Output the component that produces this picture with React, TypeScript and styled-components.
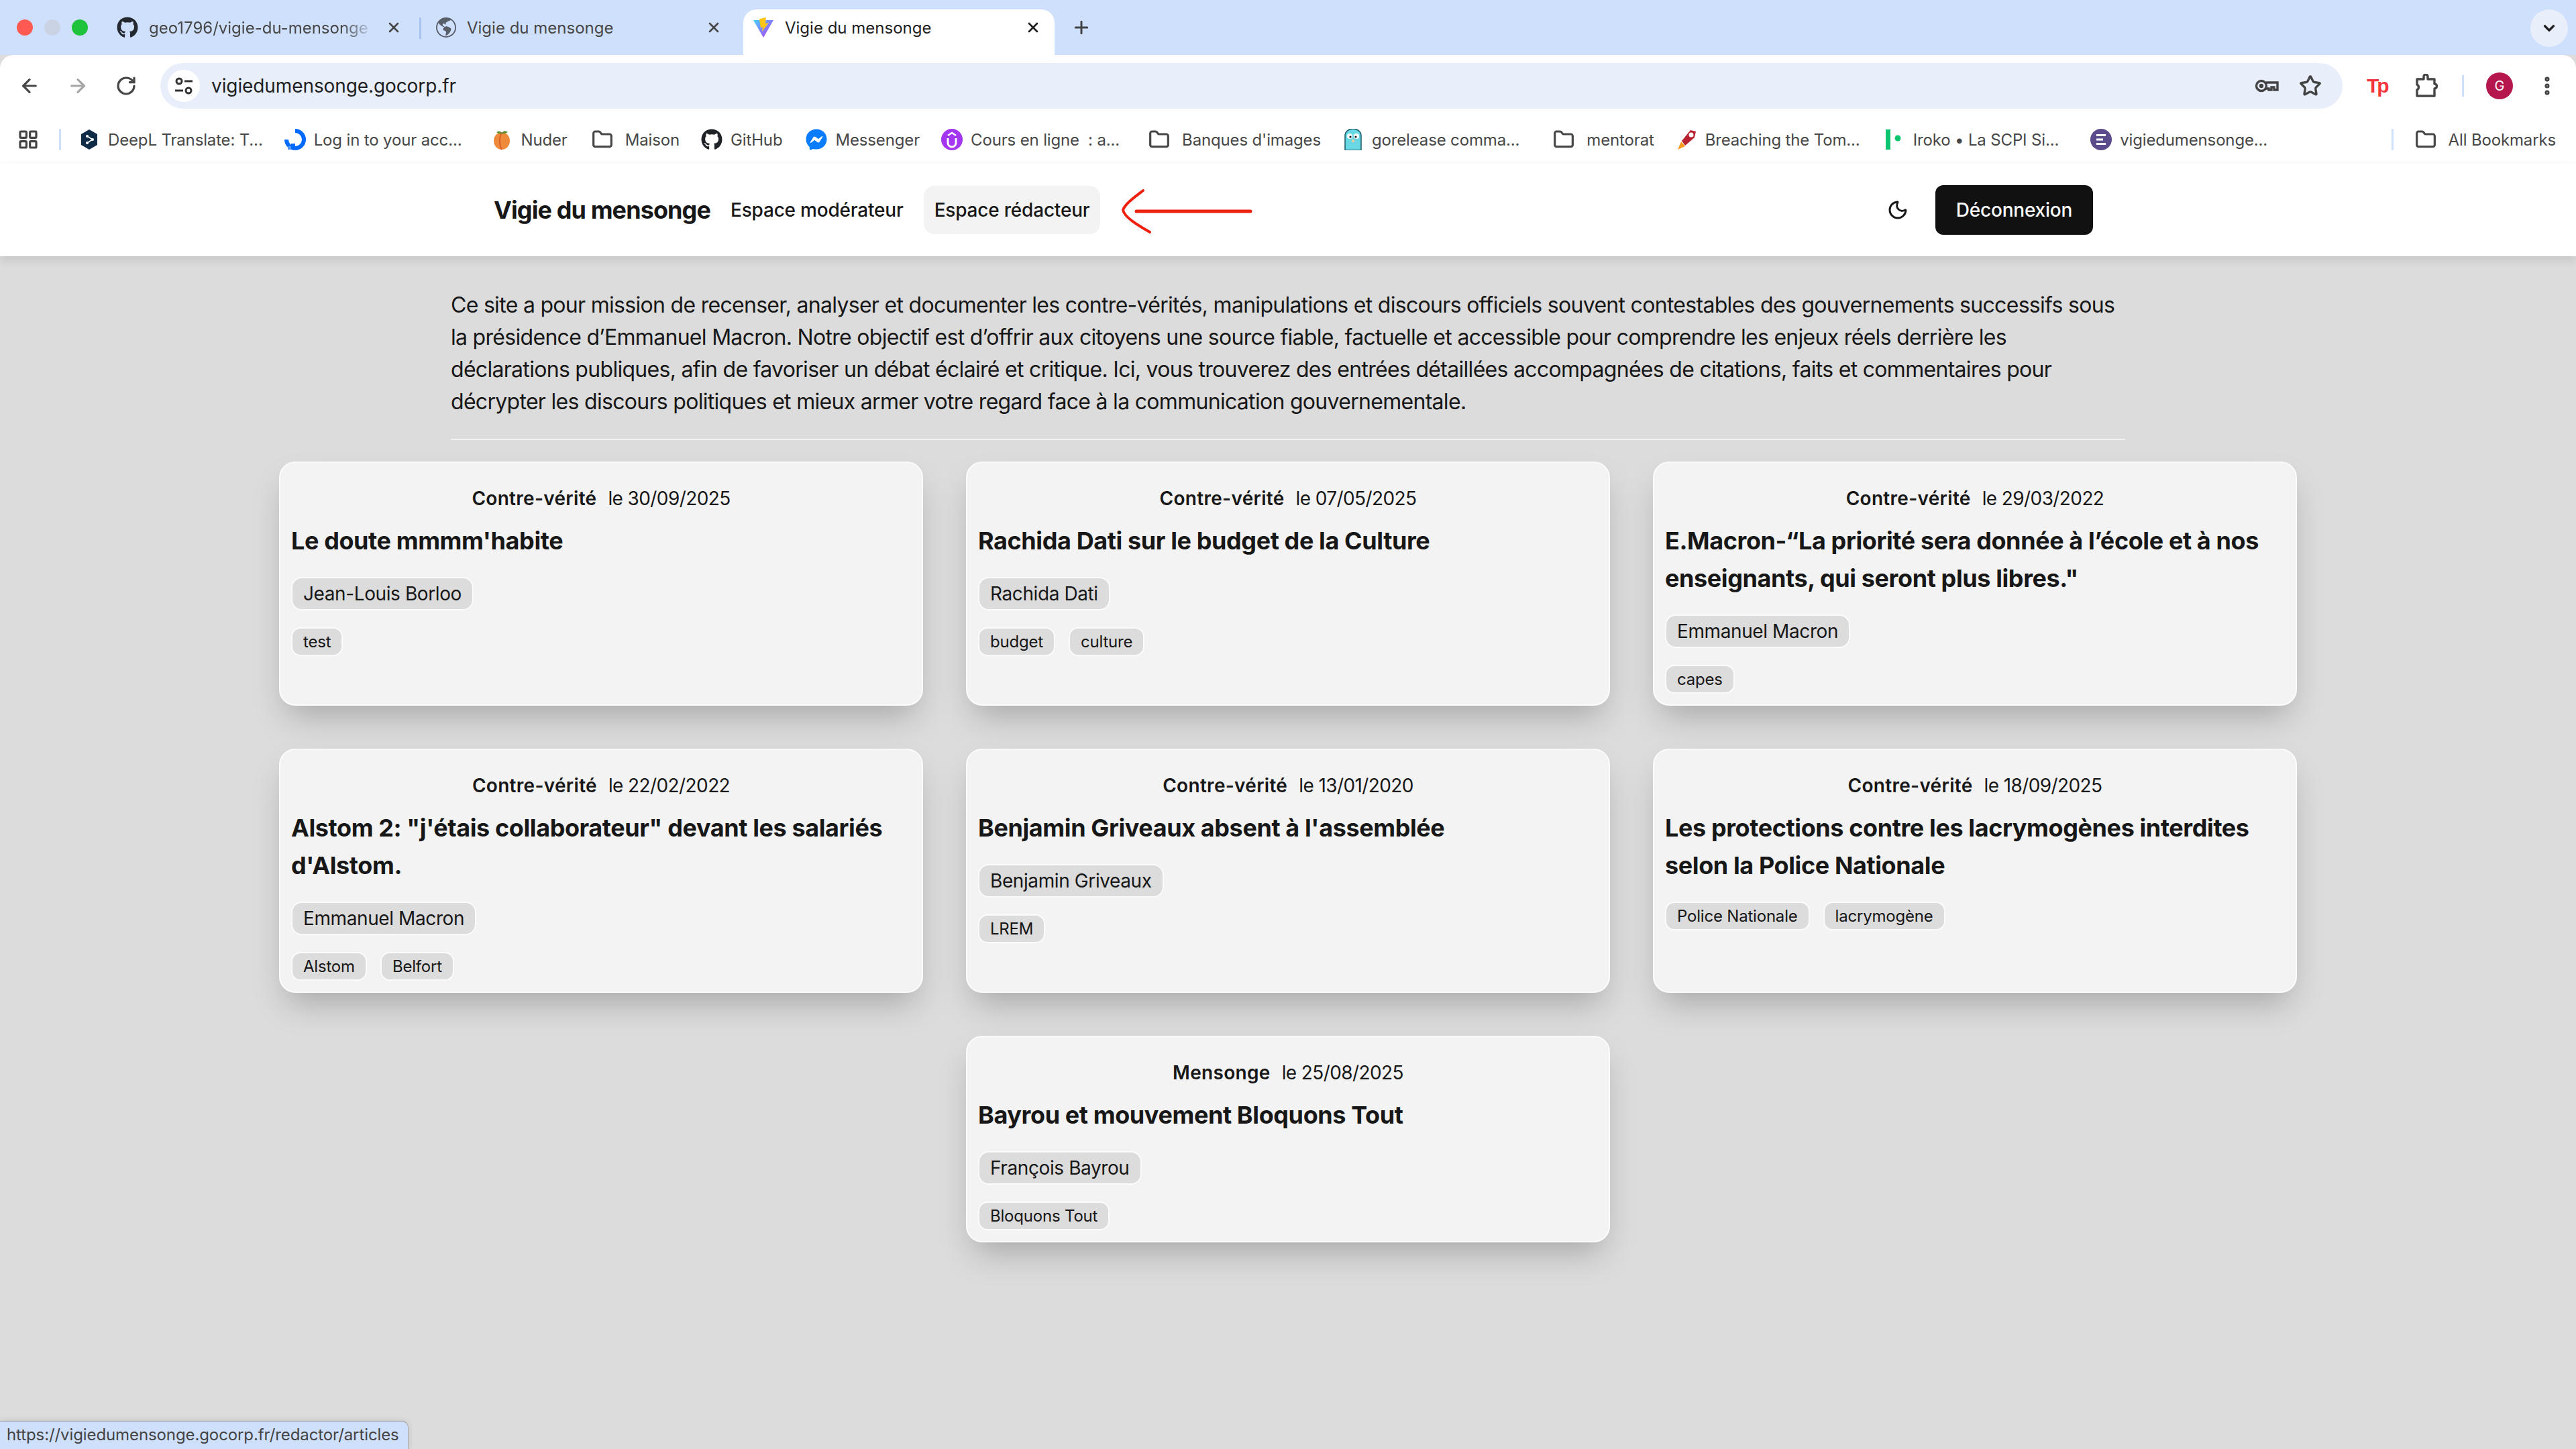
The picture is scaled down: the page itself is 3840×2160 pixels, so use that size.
import React from 'react';
import styled, {createGlobalStyle} from 'styled-components';
import {ArrowLeft, ArrowRight, RotateCw, X, Plus, Moon, Star, EllipsisVertical, ChevronDown, Folder, LayoutGrid} from 'lucide-react';
import {FaGithub, FaFacebookMessenger} from 'react-icons/fa';
import {BsGlobeAmericas} from 'react-icons/bs';

const GlobalStyle=createGlobalStyle`
    html,body{
        margin:0;
        padding:0;
        background:#dcdcdc;
    }
    *{
        box-sizing:border-box;
    }
`;

const Window=styled.div`
    position:relative;
    width:3840px;
    height:2160px;
    overflow:hidden;
    display:flex;
    flex-direction:column;
    background:#dcdcdc;
    font-family:Inter, "Liberation Sans", sans-serif;
    color:#171717;
`;

/* browser chrome */
const TabStrip=styled.div`
    height:82px;
    background:#cfe0fd;
    display:flex;
    align-items:flex-end;
    padding-left:25px;
    padding-right:12px;
    flex-shrink:0;
`;

const Lights=styled.div`
    display:flex;
    gap:17px;
    align-self:flex-start;
    margin-top:29px;
    margin-right:29px;
`;

const Light=styled.span<{$color:string}>`
    width:24px;
    height:24px;
    border-radius:50%;
    background:${p=>p.$color};
`;

const Tab=styled.div<{$active?:boolean;$width:number;$endPad:number}>`
    position:relative;
    width:${p=>p.$width}px;
    height:68px;
    padding:0 ${p=>p.$endPad}px 14px 14px;
    display:flex;
    align-items:center;
    gap:16px;
    font-size:24px;
    color:${p=>p.$active?'#1f1f1f':'#474747'};
    background:${p=>p.$active?'#ffffff':'transparent'};
    border-radius:20px 20px 0 0;
    svg{
        flex-shrink:0;
    }
`;

const TabTitle=styled.span<{$fade?:boolean}>`
    flex:1;
    min-width:0;
    white-space:nowrap;
    overflow:hidden;
    ${p=>p.$fade?'mask-image:linear-gradient(90deg,#000 85%,transparent);':''}
`;

const TabDivider=styled.span`
    width:3px;
    height:32px;
    background:#a9c3ef;
    align-self:flex-start;
    margin:26px 8px 0 10px;
`;

const NewTab=styled.div`
    align-self:flex-start;
    margin:26px 0 0 25px;
    color:#444;
    display:flex;
`;

const TabListButton=styled.div`
    margin-left:auto;
    align-self:flex-start;
    margin-top:14px;
    width:56px;
    height:56px;
    border-radius:50%;
    background:#e8effb;
    display:flex;
    align-items:center;
    justify-content:center;
    color:#1f1f1f;
`;

const Toolbar=styled.div`
    height:96px;
    background:#fff;
    border-radius:20px 20px 0 0;
    display:flex;
    align-items:center;
    padding:0 24px 4px 28px;
    flex-shrink:0;
`;

const NavIcons=styled.div`
    display:flex;
    align-items:center;
    gap:40px;
    color:#474747;
    margin-right:35px;
`;

const AddressBar=styled.div`
    width:3253px;
    height:68px;
    border-radius:34px;
    background:#e8effb;
    display:flex;
    align-items:center;
    padding:0 31px 0 11px;
    flex-shrink:0;
`;

const SiteButton=styled.div`
    width:48px;
    height:48px;
    border-radius:50%;
    background:#fff;
    display:flex;
    align-items:center;
    justify-content:center;
    margin-right:17px;
    color:#333;
`;

const Url=styled.span`
    font-size:28px;
    letter-spacing:-0.1px;
    color:#1f1f1f;
    flex:1;
`;

const AddressActions=styled.div`
    display:flex;
    align-items:center;
    gap:30px;
    color:#444;
`;

const ToolActions=styled.div`
    display:flex;
    align-items:center;
    margin-left:36px;
    color:#444;
`;

const TpMark=styled.span`
    font-family:"Liberation Sans", sans-serif;
    font-size:30px;
    font-weight:700;
    letter-spacing:-3px;
    color:#f4353b;
    margin-right:38px;
    width:34px;
`;

const ToolDivider=styled.span`
    width:3px;
    height:32px;
    background:#cfe0fd;
    margin:0 33px 0 36px;
`;

const Avatar=styled.span`
    width:40px;
    height:40px;
    border-radius:50%;
    background:#b5164e;
    color:#fff;
    font-size:20px;
    display:flex;
    align-items:center;
    justify-content:center;
    margin-right:34px;
`;

const BookmarkBar=styled.div`
    height:66px;
    background:#fff;
    display:flex;
    align-items:center;
    padding:0 30px 6px 26px;
    font-size:24px;
    letter-spacing:-0.15px;
    color:#474747;
    flex-shrink:0;
`;

const BookmarkDivider=styled.span`
    width:3px;
    height:32px;
    background:#cfe0fd;
    margin:0 26px 0 30px;
`;

const Bookmark=styled.div<{$folder?:boolean;$lead?:number}>`
    display:flex;
    align-items:center;
    gap:${p=>p.$folder?18:12}px;
    margin-left:${p=>p.$lead||0}px;
    margin-right:32px;
    white-space:pre;
    svg{
        flex-shrink:0;
    }
`;

const AllBookmarks=styled(Bookmark)`
    margin-right:0;
`;

const BookmarkSpacer=styled.div`
    flex:1;
`;

const StatusBubble=styled.div`
    position:absolute;
    left:0;
    bottom:0;
    width:609px;
    height:42px;
    padding-left:10px;
    background:#cfe0fd;
    border-top:1px solid #999;
    border-right:1px solid #aaa;
    border-top-right-radius:10px;
    font-size:24px;
    letter-spacing:-0.1px;
    line-height:40px;
    color:#444;
    white-space:nowrap;
    box-shadow:0 0 10px rgba(0,0,0,0.12);
`;

/* page */
const TopNav=styled.nav`
    position:relative;
    z-index:1;
    height:138px;
    background:#fff;
    display:flex;
    align-items:center;
    padding:0 720px 0 736px;
    box-shadow:0 6px 14px rgba(0,0,0,0.1);
    flex-shrink:0;
`;

const Brand=styled.div`
    font-size:36px;
    font-weight:650;
    letter-spacing:-0.9px;
    color:#171717;
    margin-right:14px;
    white-space:nowrap;
`;

const NavLinks=styled.div`
    display:flex;
    gap:14px;
`;

const NavLink=styled.div<{$active?:boolean}>`
    font-size:28px;
    font-weight:500;
    letter-spacing:-0.2px;
    height:72px;
    display:flex;
    align-items:center;
    padding:0 16px;
    border-radius:16px;
    background:${p=>p.$active?'#f3f3f3':'transparent'};
    white-space:nowrap;
`;

const ArrowMark=styled.svg`
    margin-left:29px;
`;

const NavRight=styled.div`
    margin-left:auto;
    display:flex;
    align-items:center;
    gap:40px;
`;

const LogoutButton=styled.div`
    width:235px;
    height:74px;
    background:#111;
    color:#fafafa;
    font-size:28px;
    font-weight:500;
    letter-spacing:-0.2px;
    border-radius:12px;
    display:flex;
    align-items:center;
    justify-content:center;
`;

const Main=styled.main`
    display:flex;
    flex-direction:column;
    align-items:center;
    padding-top:49px;
`;

const Intro=styled.div`
    width:2496px;
    font-size:32px;
    letter-spacing:-0.7px;
    line-height:48px;
    color:#171717;
    padding-bottom:31px;
    border-bottom:2px solid #f2f2f2;
    margin-bottom:32px;
`;

const CardGrid=styled.div`
    display:flex;
    flex-wrap:wrap;
    justify-content:center;
    gap:64px;
    width:3008px;
`;

const Card=styled.article`
    width:960px;
    height:364px;
    padding:32px 16px 16px;
    background:#f3f3f3;
    border:2px solid #fbfbfb;
    border-radius:24px;
    box-shadow:0 25px 50px -12px rgba(0,0,0,0.25);
    display:flex;
    flex-direction:column;
    &:last-child{
        height:308px;
    }
`;

const CardHead=styled.div`
    text-align:center;
    font-size:28px;
    line-height:42px;
    margin-bottom:14px;
    display:flex;
    justify-content:center;
    gap:17px;
`;

const Kind=styled.span`
    font-weight:600;
    letter-spacing:0.3px;
`;

const HeadDate=styled.span`
    letter-spacing:-0.6px;
`;

const CardTitle=styled.h2`
    margin:0 0 26px;
    font-size:36px;
    letter-spacing:-0.4px;
    line-height:56px;
    font-weight:650;
    color:#171717;
`;

const ChipRow=styled.div`
    display:flex;
    gap:20px;
    margin-bottom:25px;
    &:last-child{
        margin-bottom:0;
    }
`;

const PersonChip=styled.span`
    height:50px;
    padding:0 16px;
    border:2px solid #fbfbfb;
    border-radius:16px;
    background:#dcdcdc;
    font-size:28px;
    letter-spacing:-0.4px;
    line-height:46px;
`;

const TagChip=styled.span`
    height:43px;
    padding:0 16px;
    border:2px solid #fbfbfb;
    border-radius:14px;
    background:#dcdcdc;
    font-size:24px;
    letter-spacing:-0.2px;
    line-height:39px;
`;

const ViteIcon=()=>(
    <svg width="32" height="32" viewBox="0 0 32 32">
        <defs>
            <linearGradient id="viteA" x1="0" y1="0" x2="1" y2="1">
                <stop offset="0" stopColor="#41d1ff"/>
                <stop offset="1" stopColor="#bd34fe"/>
            </linearGradient>
        </defs>
        <path d="M1 5 L31 5 L16 31 Z" fill="url(#viteA)"/>
        <path d="M20 1 L10 3 L12 17 L15 15 L14 22 L24 9 L19 10 Z" fill="#ffc517"/>
    </svg>
);

const DeepLIcon=()=>(
    <svg width="32" height="32" viewBox="0 0 32 32">
        <path d="M16 1 L28 8 V24 L16 31 L4 24 V8 Z" fill="#0f2b46"/>
        <circle cx="13" cy="11" r="2" fill="#fff"/>
        <circle cx="13" cy="21" r="2" fill="#fff"/>
        <circle cx="21" cy="16" r="2" fill="#fff"/>
        <path d="M13 11 L21 16 L13 21" stroke="#fff" strokeWidth="1.5" fill="none"/>
    </svg>
);

const OceanIcon=()=>(
    <svg width="32" height="32" viewBox="0 0 32 32">
        <path d="M16 3 A13 13 0 1 1 3 16" stroke="#0069ff" strokeWidth="6" fill="none"/>
        <rect x="10" y="22" width="6" height="6" fill="#0069ff"/>
        <rect x="5" y="26" width="5" height="5" fill="#4d97ff"/>
    </svg>
);

const PeachIcon=()=>(
    <svg width="32" height="32" viewBox="0 0 32 32">
        <ellipse cx="16" cy="18" rx="12" ry="13" fill="#ef8a3a"/>
        <path d="M16 6 C12 12 12 24 16 31" stroke="#d9602a" strokeWidth="2" fill="none"/>
        <path d="M8 5 Q13 2 16 6 Q20 1 25 5 Q20 8 16 7 Q12 8 8 5Z" fill="#5d8a2f"/>
    </svg>
);

const UdemyIcon=()=>(
    <svg width="32" height="32" viewBox="0 0 32 32">
        <circle cx="16" cy="16" r="16" fill="#a435f0"/>
        <path d="M10 14 V21 A6 6 0 0 0 22 21 V14" stroke="#fff" strokeWidth="3" fill="none"/>
        <path d="M10 10 L16 6 L22 10" stroke="#fff" strokeWidth="2.5" fill="none"/>
    </svg>
);

const GopherIcon=()=>(
    <svg width="32" height="32" viewBox="0 0 32 32">
        <path d="M4 32 V10 A12 10 0 0 1 28 10 V32 Z" fill="#6ad7e5" stroke="#1d5b66" strokeWidth="1.5"/>
        <circle cx="11" cy="11" r="4" fill="#fff"/>
        <circle cx="21" cy="11" r="4" fill="#fff"/>
        <circle cx="12" cy="12" r="1.6" fill="#111"/>
        <circle cx="20" cy="12" r="1.6" fill="#111"/>
        <rect x="14" y="16" width="4" height="4" fill="#e8c9a0"/>
    </svg>
);

const RocketIcon=()=>(
    <svg width="32" height="32" viewBox="0 0 32 32">
        <path d="M3 31 L8 19 L14 26 Z" fill="#f79a1e"/>
        <path d="M9 18 L22 2 L30 4 L28 13 L14 25 Z" fill="#b7202e"/>
        <circle cx="23" cy="9" r="3.500" fill="#fff"/>
    </svg>
);

const IrokoIcon=()=>(
    <svg width="32" height="32" viewBox="0 0 32 32">
        <rect x="3" y="1" width="7" height="30" fill="#0bc46f"/>
        <circle cx="21" cy="14" r="4.500" fill="#0bc46f"/>
    </svg>
);

const VigieIcon=()=>(
    <svg width="32" height="32" viewBox="0 0 32 32">
        <circle cx="16" cy="16" r="16" fill="#5b4a8c"/>
        <rect x="9" y="8" width="14" height="3" fill="#fff"/>
        <rect x="9" y="14.500" width="10" height="3" fill="#fff"/>
        <rect x="9" y="21" width="14" height="3" fill="#fff"/>
    </svg>
);

const SiteControls=()=>(
    <svg width="30" height="30" viewBox="0 0 30 30" fill="none" stroke="currentColor" strokeWidth="3">
        <circle cx="8" cy="8" r="4"/>
        <path d="M16 8h12"/>
        <circle cx="22" cy="22" r="4"/>
        <path d="M2 22h12"/>
    </svg>
);

// horizontal password key, bow on the left
const KeyIcon=()=>(
    <svg width="36" height="36" viewBox="0 0 36 36" fill="none" stroke="currentColor" strokeWidth="3.4">
        <circle cx="10" cy="18" r="7.500"/>
        <circle cx="10" cy="18" r="1.500" fill="currentColor"/>
        <path d="M17 13 H34 V24 H29 V20 H25 V24 H21 V22 H17"/>
    </svg>
);

const ExtensionIcon=()=>(
    <svg width="34" height="36" viewBox="0 0 34 36" fill="none" stroke="currentColor" strokeWidth="3.4" strokeLinejoin="round">
        <path d="M3 8 H13 V4 A3 3 0 0 1 19 4 V8 H29 V15 A3.500 3.500 0 0 1 29 22 V33 H3 V24 A4.500 4.500 0 0 0 3 16 Z"/>
    </svg>
);

const FolderIcon=()=><Folder size={32} strokeWidth={2.4}/>;

const bookmarks:{icon:React.ReactNode;label:string;folder?:boolean;lead?:number}[]=[
    {icon:<DeepLIcon/>,label:'DeepL Translate: T...'},
    {icon:<OceanIcon/>,label:'Log in to your acc...'},
    {icon:<PeachIcon/>,label:'Nuder',lead:12},
    {icon:<FolderIcon/>,label:'Maison',folder:true,lead:4},
    {icon:<FaGithub size={32} color="#1f2328"/>,label:'GitHub'},
    {icon:<FaFacebookMessenger size={32} color="#0a7cff"/>,label:'Messenger',lead:3},
    {icon:<UdemyIcon/>,label:'Cours en ligne  : a...'},
    {icon:<FolderIcon/>,label:"Banques d'images",folder:true,lead:11},
    {icon:<GopherIcon/>,label:'gorelease comma...'},
    {icon:<FolderIcon/>,label:'mentorat',folder:true,lead:18},
    {icon:<RocketIcon/>,label:'Breaching the Tom...'},
    {icon:<IrokoIcon/>,label:'Iroko • La SCPI Si...',lead:3},
    {icon:<VigieIcon/>,label:'vigiedumensonge...',lead:15},
];

type Article={kind:string;date:string;title:string;person?:string;tags:string[]};

const articles:Article[]=[
    {kind:'Contre-vérité',date:'le 30/09/2025',title:"Le doute mmmm'habite",person:'Jean-Louis Borloo',tags:['test']},
    {kind:'Contre-vérité',date:'le 07/05/2025',title:'Rachida Dati sur le budget de la Culture',person:'Rachida Dati',tags:['budget','culture']},
    {kind:'Contre-vérité',date:'le 29/03/2022',title:'E.Macron-“La priorité sera donnée à l’école et à nos enseignants, qui seront plus libres."',person:'Emmanuel Macron',tags:['capes']},
    {kind:'Contre-vérité',date:'le 22/02/2022',title:'Alstom 2: "j\'étais collaborateur" devant les salariés d\'Alstom.',person:'Emmanuel Macron',tags:['Alstom','Belfort']},
    {kind:'Contre-vérité',date:'le 13/01/2020',title:"Benjamin Griveaux absent à l'assemblée",person:'Benjamin Griveaux',tags:['LREM']},
    {kind:'Contre-vérité',date:'le 18/09/2025',title:'Les protections contre les lacrymogènes interdites selon la Police Nationale',tags:['Police Nationale','lacrymogène']},
    {kind:'Mensonge',date:'le 25/08/2025',title:'Bayrou et mouvement Bloquons Tout',person:'François Bayrou',tags:['Bloquons Tout']},
];

const App=()=>(
    <Window>
        <GlobalStyle/>
        <TabStrip>
            <Lights>
                <Light $color="#ff5a52"/>
                <Light $color="#c9d3e3"/>
                <Light $color="#1fc23b"/>
            </Lights>
            <Tab $width={455} $endPad={16}>
                <FaGithub size={32} color="#24292f"/>
                <TabTitle $fade>geo1796/vigie-du-mensonge</TabTitle>
                <X size={24} strokeWidth={2.6}/>
            </Tab>
            <TabDivider/>
            <Tab $width={472} $endPad={32}>
                <BsGlobeAmericas size={30} color="#595f69"/>
                <TabTitle>Vigie du mensonge</TabTitle>
                <X size={24} strokeWidth={2.6}/>
            </Tab>
            <Tab $active $width={464} $endPad={20}>
                <ViteIcon/>
                <TabTitle>Vigie du mensonge</TabTitle>
                <X size={24} strokeWidth={2.6}/>
            </Tab>
            <NewTab><Plus size={30} strokeWidth={2.4}/></NewTab>
            <TabListButton><ChevronDown size={26} strokeWidth={3}/></TabListButton>
        </TabStrip>
        <Toolbar>
            <NavIcons>
                <ArrowLeft size={32} strokeWidth={2.4}/>
                <ArrowRight size={32} strokeWidth={2.4} color="#a6a6a6"/>
                <RotateCw size={32} strokeWidth={2.4}/>
            </NavIcons>
            <AddressBar>
                <SiteButton><SiteControls/></SiteButton>
                <Url>vigiedumensonge.gocorp.fr</Url>
                <AddressActions>
                    <KeyIcon/>
                    <Star size={34} strokeWidth={2.4}/>
                </AddressActions>
            </AddressBar>
            <ToolActions>
                <TpMark>Tp</TpMark>
                <ExtensionIcon/>
                <ToolDivider/>
                <Avatar>G</Avatar>
                <EllipsisVertical size={34} strokeWidth={3}/>
            </ToolActions>
        </Toolbar>
        <BookmarkBar>
            <LayoutGrid size={32} strokeWidth={2.4} color="#444"/>
            <BookmarkDivider/>
            {bookmarks.map(b=>(
                <Bookmark key={b.label} $folder={b.folder} $lead={b.lead}>{b.icon}<span>{b.label}</span></Bookmark>
            ))}
            <BookmarkSpacer/>
            <BookmarkDivider/>
            <AllBookmarks $folder $lead={6}><FolderIcon/><span>All Bookmarks</span></AllBookmarks>
        </BookmarkBar>
        <TopNav>
            <Brand>Vigie du mensonge</Brand>
            <NavLinks>
                <NavLink>Espace modérateur</NavLink>
                <NavLink $active>Espace rédacteur</NavLink>
            </NavLinks>
            <ArrowMark width="198" height="70" viewBox="0 0 198 70" fill="none" stroke="#f0200f" strokeLinecap="round">
                <path d="M25 37 H195" strokeWidth="5"/>
                <path d="M35 6 C22 16 8 26 5 35 C7 46 28 58 45 68" strokeWidth="4"/>
            </ArrowMark>
            <NavRight>
                <Moon size={32} strokeWidth={2.2}/>
                <LogoutButton>Déconnexion</LogoutButton>
            </NavRight>
        </TopNav>
        <Main>
            <Intro>
                Ce site a pour mission de recenser, analyser et documenter les contre-vérités, manipulations et discours officiels souvent contestables des gouvernements successifs sous la présidence d’Emmanuel Macron. Notre objectif est d’offrir aux citoyens une source fiable, factuelle et accessible pour comprendre les enjeux réels derrière les déclarations publiques, afin de favoriser un débat éclairé et critique. Ici, vous trouverez des entrées détaillées accompagnées de citations, faits et commentaires pour décrypter les discours politiques et mieux armer votre regard face à la communication gouvernementale.
            </Intro>
            <CardGrid>
                {articles.map(a=>(
                    <Card key={a.title}>
                        <CardHead><Kind>{a.kind}</Kind><HeadDate>{a.date}</HeadDate></CardHead>
                        <CardTitle>{a.title}</CardTitle>
                        {a.person&&<ChipRow><PersonChip>{a.person}</PersonChip></ChipRow>}
                        <ChipRow>{a.tags.map(t=><TagChip key={t}>{t}</TagChip>)}</ChipRow>
                    </Card>
                ))}
            </CardGrid>
        </Main>
        <StatusBubble>https://vigiedumensonge.gocorp.fr/redactor/articles</StatusBubble>
    </Window>
);

export default App;
